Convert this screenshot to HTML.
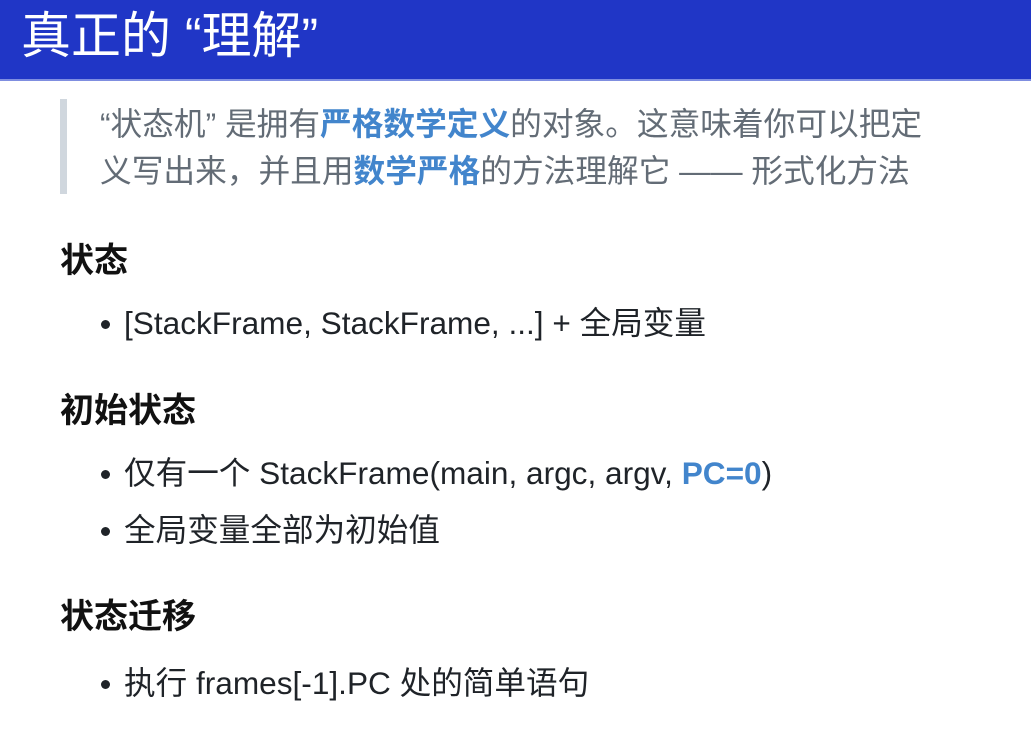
<!DOCTYPE html>
<html><head><meta charset="utf-8"><style>
html,body{margin:0;padding:0;background:#fff;width:1031px;height:734px;overflow:hidden}
body{font-family:"Liberation Sans","Noto Sans CJK SC",sans-serif;color:#1f2328;position:relative}
.hdr{position:absolute;left:0;top:0;width:1031px;height:79px;background:#2036c6;border-bottom:2px solid #7f8ee0}
.hdr span{position:absolute;left:21px;top:4px;font-size:50px;line-height:64px;color:#fff}
.bar{position:absolute;left:60px;top:99px;width:7px;height:95px;background:#d0d7de}
.q{position:absolute;left:100px;font-size:31.7px;line-height:46px;color:#636c76;white-space:nowrap}
.b{color:#4285cc;font-weight:bold}
.h{position:absolute;left:60px;font-size:34px;font-weight:bold;line-height:40px;color:#111}
.li{position:absolute;left:124px;font-size:31.6px;line-height:40px;white-space:nowrap;color:#1f2328}
.li:before{content:"";position:absolute;left:-23px;top:17px;width:9px;height:9px;border-radius:50%;background:#1f2328}
</style></head><body>
<div class="hdr"><span>真正的 “理解”</span></div>
<div class="bar"></div>
<div class="q" style="top:101px">“状态机” 是拥有<span class="b">严格数学定义</span>的对象。这意味着你可以把定</div>
<div class="q" style="top:148px">义写出来，并且用<span class="b">数学严格</span>的方法理解它 —— 形式化方法</div>
<div class="h" style="top:241px">状态</div>
<div class="li" style="top:303px">[StackFrame, StackFrame, ...] + 全局变量</div>
<div class="h" style="top:391px">初始状态</div>
<div class="li" style="top:453px">仅有一个 StackFrame(main, argc, argv, <span class="b">PC=0</span>)</div>
<div class="li" style="top:510px">全局变量全部为初始值</div>
<div class="h" style="top:597px">状态迁移</div>
<div class="li" style="top:663px">执行 frames[-1].PC 处的简单语句</div>
</body></html>
